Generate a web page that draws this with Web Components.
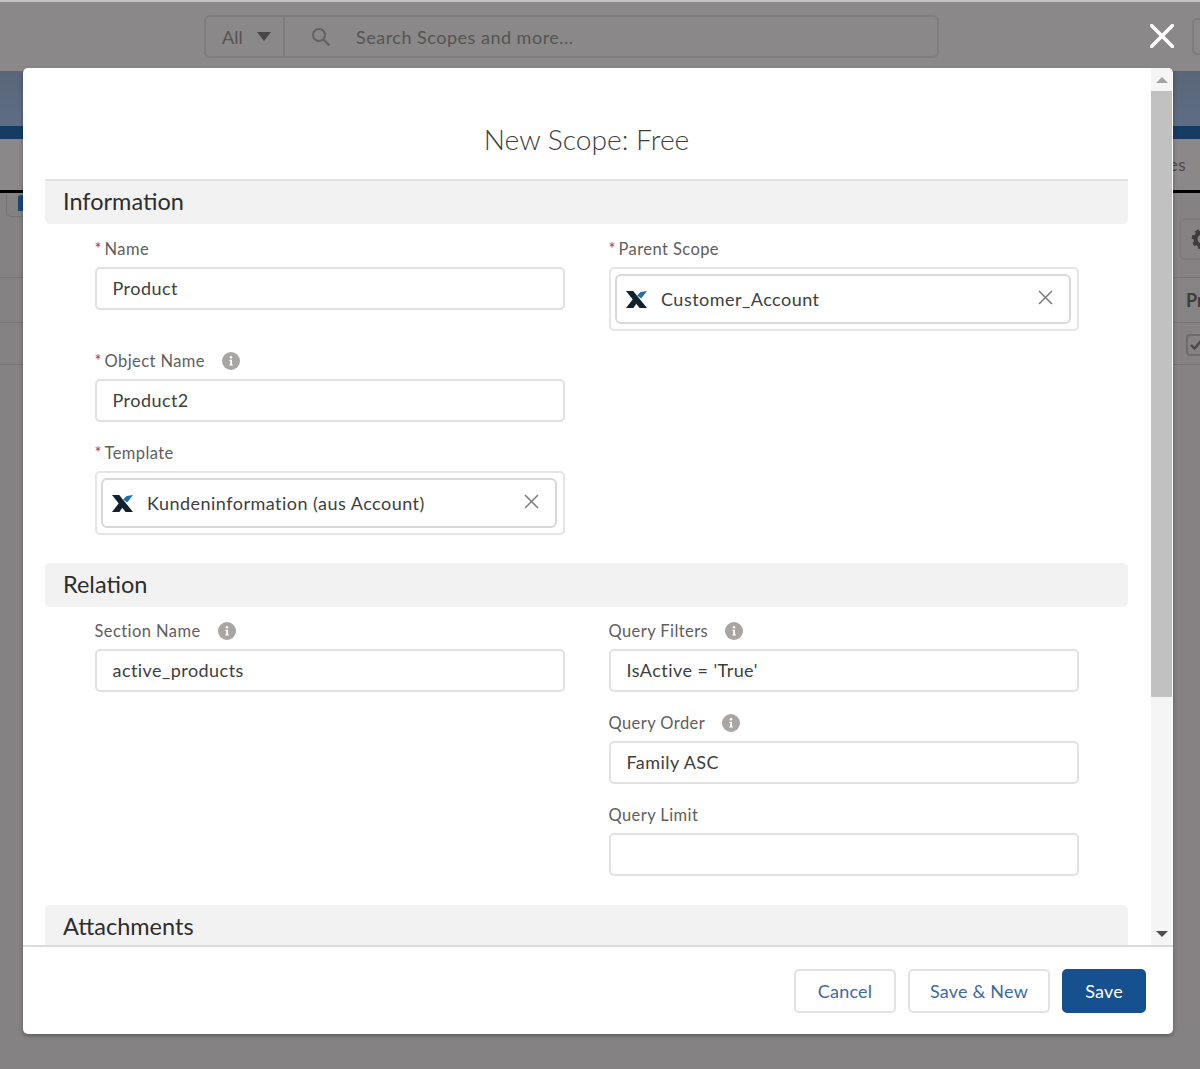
<!DOCTYPE html>
<html lang="en">
<head>
<meta charset="utf-8">
<title>New Scope: Free</title>
<style>
  html, body { margin: 0; height: 100%; }
  body { font-family: Lato, "Open Sans", sans-serif; overflow: hidden; }
</style>
</head>
<body>
<page-backdrop></page-backdrop>
<modal-close></modal-close>
<scope-modal heading="New Scope: Free">
  <form-section heading="Information" pad="13">
    <div slot="left">
      <form-field label="Name" required value="Product" after="39"></form-field>
      <form-field label="Object Name" required help value="Product2"></form-field>
      <form-field label="Template" required lookup value="Kundeninformation (aus Account)"></form-field>
    </div>
    <div slot="right">
      <form-field label="Parent Scope" required lookup value="Customer_Account"></form-field>
    </div>
  </form-section>
  <form-section heading="Relation" pad="12" gap="9">
    <div slot="left">
      <form-field label="Section Name" help value="active_products"></form-field>
    </div>
    <div slot="right">
      <form-field label="Query Filters" help value="IsActive = 'True'"></form-field>
      <form-field label="Query Order" help value="Family ASC"></form-field>
      <form-field label="Query Limit" value=""></form-field>
    </div>
  </form-section>
  <form-section heading="Attachments" gap="10"></form-section>
</scope-modal>

<script>
class PageBackdrop extends HTMLElement {
    constructor() {
        super();
        this.attachShadow({ mode: 'open' });
    }

    connectedCallback() {
        this.shadowRoot.innerHTML = `
      <style>
        :host {
          display: flex;
          flex-direction: column;
          height: 1069px;
          background: #848282;
          border-top: 2px solid #c4c4c4;
          box-sizing: border-box;
          overflow: hidden;
          color: #4a4848;
        }
        .top { height: 69px; flex: none; background: #8a8888; display: flex; align-items: center; box-sizing: border-box; }
        .top search-bar { margin-left: 204px; }
        .top .side { width: 30px; height: 37px; margin-left: 253px; border: 2px solid #7e7c7c; border-radius: 5px; box-sizing: border-box; flex: none; }
        .blue { height: 55px; flex: none; background: linear-gradient(#596679, #5f6d83); }
        .navy { height: 13px; flex: none; background: #173c63; }
        .tabs { height: 51px; flex: none; background: #8a8888; display: flex; justify-content: flex-end; align-items: center; padding-right: 14px; font-size: 17px; letter-spacing: 0.5px; }
        .rule { height: 3px; flex: none; background: #000; }
        .tools { height: 84px; flex: none; display: flex; justify-content: space-between; padding-top: 2px; box-sizing: border-box; }
        .tools .left { width: 30px; height: 22px; margin-left: 6px; border: 1px solid #767474; border-top: 0; border-radius: 0 0 5px 5px; box-sizing: border-box; overflow: hidden; }
        .tools .left i { display: block; width: 6px; height: 16px; margin: 0 0 0 11px; background: #18477c; border-radius: 3px 0 0 0; }
        .tools .gear { width: 40px; height: 42px; margin-top: 23px; margin-right: -19px; border: 2px solid #7e7c7c; border-radius: 6px; box-sizing: border-box; display: flex; align-items: center; padding-left: 10px; }
        .row { height: 45px; flex: none; border-top: 1px solid #767474; box-sizing: border-box; display: flex; justify-content: flex-end; align-items: center; }
        .row .head { width: 25px; height: 44px; display: flex; align-items: center; justify-content: flex-end; font-weight: 700; font-size: 18px; color: #3f3d3d; background: #858383; overflow: hidden; }
        .row .head span { display: block; width: 14px; }
        .row .check { width: 20px; height: 22px; margin: 2px -6px 0 0; border: 2px solid #6d6b6b; border-radius: 4px; box-sizing: border-box; }
        .row.short { height: 42px; }
        .fill { flex: 1; border-top: 1px solid #767474; }
      </style>
      <div class="top"><search-bar></search-bar><div class="side"></div></div>
      <div class="blue"></div>
      <div class="navy"></div>
      <div class="tabs">es</div>
      <div class="rule"></div>
      <div class="tools">
        <div class="left"><i></i></div>
        <div class="gear">
          <svg width="22" height="22" viewBox="0 0 22 22"><circle cx="11" cy="11" r="6.5" fill="none" stroke="#3d3b3b" stroke-width="4"/><circle cx="11" cy="11" r="9" fill="none" stroke="#3d3b3b" stroke-width="2.5" stroke-dasharray="4 3"/></svg>
        </div>
      </div>
      <div class="row"><div class="head"><span>Pr</span></div></div>
      <div class="row short"><div class="check">
        <svg width="16" height="18" viewBox="0 0 16 18"><path d="M3 9l3.5 3.5L13 5" fill="none" stroke="#4a4848" stroke-width="2.4"/></svg>
      </div></div>
      <div class="fill"></div>
    `;
    }
}

class SearchBar extends HTMLElement {
    constructor() {
        super();
        this.attachShadow({ mode: 'open' });
    }

    connectedCallback() {
        this.shadowRoot.innerHTML = `
      <style>
        :host {
          display: flex;
          flex: none;
          width: 735px;
          height: 43px;
          border: 2px solid #7e7c7c;
          border-radius: 6px;
          box-sizing: border-box;
          align-items: center;
          font-size: 18px;
          color: #565454;
        }
        .scope { width: 79px; height: 100%; border-right: 2px solid #7e7c7c; display: flex; align-items: center; padding-left: 16px; box-sizing: border-box; flex: none; }
        .arrow { width: 0; height: 0; margin-left: 14px; border: 7.5px solid transparent; border-top: 9px solid #484646; border-bottom: 0; }
        svg { margin-left: 26px; flex: none; }
        .query { margin-left: 25px; letter-spacing: 0.5px; }
      </style>
      <div class="scope">All<span class="arrow"></span></div>
      <svg width="20" height="20" viewBox="0 0 20 20"><circle cx="8" cy="8" r="6" fill="none" stroke="#636161" stroke-width="2"/><path d="M12.5 12.5L18.5 18.5" stroke="#636161" stroke-width="2.4"/></svg>
      <span class="query">Search Scopes and more...</span>
    `;
    }
}

class ModalClose extends HTMLElement {
    constructor() {
        super();
        this.attachShadow({ mode: 'open' });
    }

    connectedCallback() {
        this.shadowRoot.innerHTML = `
      <style>
        :host { position: absolute; left: 1150px; top: 24px; width: 24px; height: 24px; display: block; }
      </style>
      <svg width="24" height="24" viewBox="0 0 24 24"><path d="M1.5 1.5L22.5 22.5M22.5 1.5L1.5 22.5" stroke="#fff" stroke-width="3.6" stroke-linecap="round"/></svg>
    `;
    }
}

class ScopeModal extends HTMLElement {
    constructor() {
        super();
        this.attachShadow({ mode: 'open' });
    }

    connectedCallback() {
        const heading = this.getAttribute('heading') || '';

        this.shadowRoot.innerHTML = `
      <style>
        :host {
          position: absolute;
          left: 23px;
          top: 68px;
          width: 1150px;
          height: 966px;
          display: flex;
          flex-direction: column;
          background: #fff;
          border-radius: 5px;
          box-shadow: 0 2px 4px rgba(0,0,0,0.3);
          overflow: hidden;
        }
        .main { height: 877px; flex: none; display: flex; }
        .scroll { flex: 1; min-width: 0; padding: 0 22px; overflow: hidden; }
        h2 { margin: 0; height: 111px; box-sizing: border-box; padding-top: 51px; font-size: 28.2px; line-height: 40px; font-weight: 300; text-align: center; color: #3e3e3c; }
        footer { flex: 1; border-top: 2px solid #dcdbdb; display: flex; justify-content: flex-end; gap: 12px; padding: 22px 27px 0 0; box-sizing: border-box; }
      </style>
      <div class="main">
        <div class="scroll">
          <h2>${heading}</h2>
          <slot></slot>
        </div>
        <fake-scrollbar></fake-scrollbar>
      </div>
      <footer>
        <sf-button width="102">Cancel</sf-button>
        <sf-button width="142">Save &amp; New</sf-button>
        <sf-button width="84" brand>Save</sf-button>
      </footer>
    `;
    }
}

class FakeScrollbar extends HTMLElement {
    constructor() {
        super();
        this.attachShadow({ mode: 'open' });
    }

    connectedCallback() {
        this.shadowRoot.innerHTML = `
      <style>
        :host { display: flex; flex-direction: column; width: 21px; flex: none; background: #f5f5f5; margin: 0 1px 0 1px; }
        .btn { height: 23px; flex: none; display: flex; align-items: center; justify-content: center; }
        .up { width: 0; height: 0; border: 6px solid transparent; border-bottom: 6px solid #a3a3a3; border-top: 0; }
        .down { width: 0; height: 0; border: 6px solid transparent; border-top: 6px solid #505050; border-bottom: 0; }
        .thumb { height: 606px; flex: none; background: #c1c1c1; }
        .track { flex: 1; }
      </style>
      <div class="btn"><span class="up"></span></div>
      <div class="thumb"></div>
      <div class="track"></div>
      <div class="btn"><span class="down"></span></div>
    `;
    }
}

class FormSection extends HTMLElement {
    constructor() {
        super();
        this.attachShadow({ mode: 'open' });
    }

    connectedCallback() {
        const heading = this.getAttribute('heading') || '';
        const pad = this.getAttribute('pad') || '0';
        const gap = this.getAttribute('gap') || '0';
        const hasFields = this.children.length > 0;

        this.shadowRoot.innerHTML = `
      <style>
        :host { display: block; margin-top: ${gap}px; }
        h3 {
          margin: 0;
          height: 44px;
          padding-left: 18px;
          background: #f3f2f2;
          font-size: 23.5px;
          line-height: 42px;
          font-weight: 400;
          color: #2e2e2c;
        }
        h3.ruled { height: 45px; border-top: 2px solid #e2e2e2; box-sizing: border-box; line-height: 41px; border-radius: 0 0 5px 5px; }
        h3.round { border-radius: 5px; }
        .grid { display: grid; grid-template-columns: 470px 470px; column-gap: 44px; padding: ${pad}px 0 0 49.5px; }
      </style>
      <h3 class="${heading === 'Information' ? 'ruled' : 'round'}">${heading}</h3>
      ${hasFields ? '<div class="grid"><div><slot name="left"></slot></div><div><slot name="right"></slot></div></div>' : ''}
    `;
    }
}

class FormField extends HTMLElement {
    constructor() {
        super();
        this.attachShadow({ mode: 'open' });
    }

    connectedCallback() {
        const label = this.getAttribute('label') || '';
        const value = this.getAttribute('value') || '';
        const after = this.getAttribute('after') || '19';
        const star = this.hasAttribute('required') ? '<span class="star">*</span>' : '';
        const help = this.hasAttribute('help') ? '<info-icon></info-icon>' : '';
        const control = this.hasAttribute('lookup')
            ? `<lookup-pill>${value}</lookup-pill>`
            : `<div class="input">${value}</div>`;

        this.shadowRoot.innerHTML = `
      <style>
        :host { display: block; margin-bottom: ${after}px; }
        .label { height: 24px; margin-bottom: 6px; display: flex; align-items: center; font-size: 16.5px; letter-spacing: 0.42px; color: #5f5e5c; }
        .star { color: #c23934; margin-right: 3px; letter-spacing: 0; }
        .input {
          height: 43px;
          box-sizing: border-box;
          border: 2px solid #e2e1e0;
          border-radius: 5px;
          padding-left: 16px;
          font-size: 18px;
          letter-spacing: 0.45px;
          line-height: 39px;
          color: #3e3e3c;
        }
      </style>
      <div class="label">${star}${label}${help}</div>
      ${control}
    `;
    }
}

class InfoIcon extends HTMLElement {
    constructor() {
        super();
        this.attachShadow({ mode: 'open' });
    }

    connectedCallback() {
        this.shadowRoot.innerHTML = `
      <style>
        :host { display: inline-flex; margin-left: 17px; }
      </style>
      <svg width="18" height="18" viewBox="0 0 18 18"><circle cx="9" cy="9" r="9" fill="#a8a5a3"/><circle cx="9" cy="5.2" r="1.3" fill="#fff"/><path d="M7.4 7.8h2.6v4.6h1v1.2H7.2v-1.2h1V9H7.4z" fill="#fff"/></svg>
    `;
    }
}

class LookupPill extends HTMLElement {
    constructor() {
        super();
        this.attachShadow({ mode: 'open' });
    }

    connectedCallback() {
        this.shadowRoot.innerHTML = `
      <style>
        :host {
          display: block;
          height: 64px;
          box-sizing: border-box;
          border: 2px solid #e6e5e5;
          border-radius: 5px;
          padding: 5px 5.5px 5px 4.5px;
        }
        .pill {
          height: 50px;
          box-sizing: border-box;
          border: 2px solid #d9d8d8;
          border-radius: 6px;
          display: flex;
          align-items: center;
          padding: 0 16px 0 9px;
          font-size: 18px;
          letter-spacing: 0.48px;
          color: #3e3e3c;
        }
        .logo { flex: none; margin-right: 14px; }
        .text { flex: 1; }
        .clear { flex: none; margin-bottom: 4px; }
      </style>
      <div class="pill">
        <svg class="logo" width="21" height="17" viewBox="0 0 21 17">
          <path d="M0 0h7.2L21 17h-7.4z" fill="#10222e"/>
          <path d="M7.4 7.4l3.6 4.4L7.4 17H0z" fill="#10222e"/>
          <path d="M11.2 4.6L14.6 1 21 0l-5.8 7.4z" fill="#1f6fa8"/>
        </svg>
        <span class="text"><slot></slot></span>
        <svg class="clear" width="15" height="15" viewBox="0 0 15 15"><path d="M1 1L14 14M14 1L1 14" stroke="#7d7b7a" stroke-width="1.5"/></svg>
      </div>
    `;
    }
}

class SfButton extends HTMLElement {
    constructor() {
        super();
        this.attachShadow({ mode: 'open' });
    }

    connectedCallback() {
        const width = this.getAttribute('width') || '100';
        const brand = this.hasAttribute('brand');

        this.shadowRoot.innerHTML = `
      <style>
        :host {
          display: flex;
          align-items: center;
          justify-content: center;
          width: ${width}px;
          height: 44px;
          box-sizing: border-box;
          border: 2px solid ${brand ? '#17508f' : '#e3e2e2'};
          border-radius: 5px;
          background: ${brand ? '#17508f' : '#fff'};
          color: ${brand ? '#fff' : '#40699f'};
          font-size: 18px;
          letter-spacing: 0.2px;
        }
      </style>
      <slot></slot>
    `;
    }
}

customElements.define('page-backdrop', PageBackdrop);
customElements.define('search-bar', SearchBar);
customElements.define('modal-close', ModalClose);
customElements.define('scope-modal', ScopeModal);
customElements.define('fake-scrollbar', FakeScrollbar);
customElements.define('form-section', FormSection);
customElements.define('form-field', FormField);
customElements.define('info-icon', InfoIcon);
customElements.define('lookup-pill', LookupPill);
customElements.define('sf-button', SfButton);
</script>
</body>
</html>
